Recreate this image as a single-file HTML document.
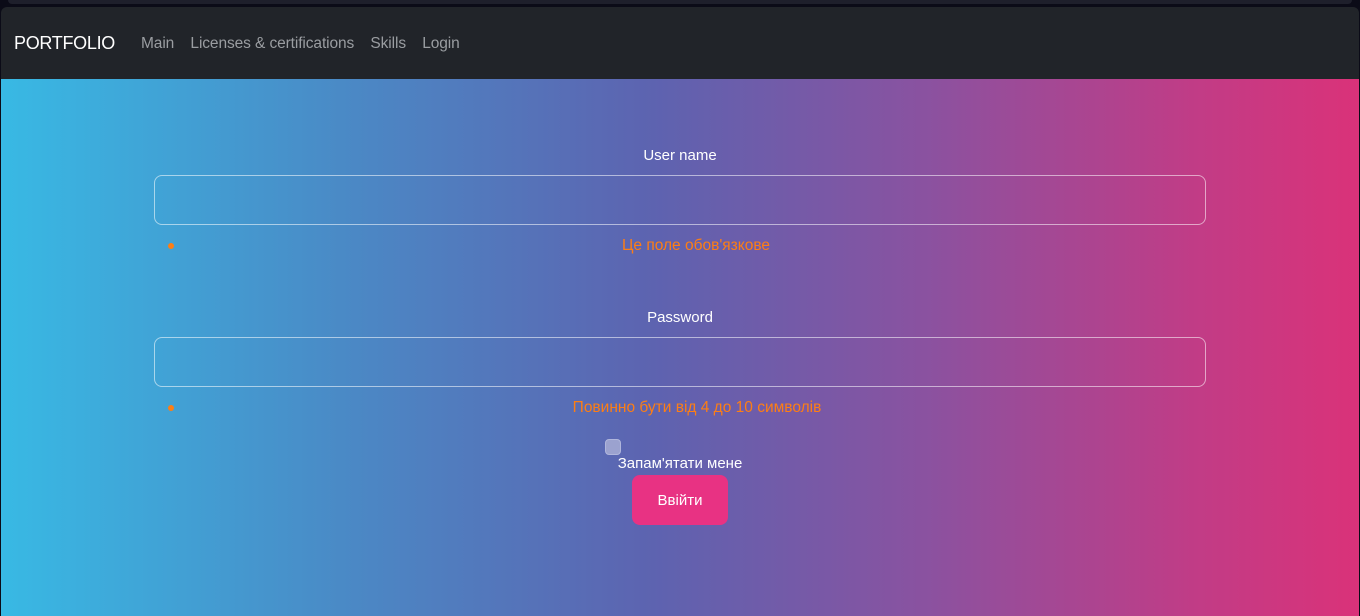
<!DOCTYPE html>
<html><head><meta charset="utf-8"><style>
*{box-sizing:border-box;margin:0;padding:0}
html,body{width:1360px;height:616px;overflow:hidden;background:#0b0b17;font-family:"Segoe UI","Liberation Sans","Noto Sans CJK SC",sans-serif;}
.top{position:absolute;left:8px;top:0;width:1344px;height:4px;background:#1e1f2b;border-radius:0 0 4px 4px}
.nav{position:absolute;left:1px;top:7px;width:1358px;height:80px;background:#212429;border-radius:6px 6px 0 0}
.brand{position:absolute;left:13px;top:26px;font-size:18px;color:#fff;letter-spacing:-0.3px}
.links{position:absolute;left:140px;top:28px;font-size:15.5px;color:#9a9da1;letter-spacing:-0.1px}
.links span{margin-right:12px}
.main{position:absolute;left:1px;top:79px;width:1358px;height:537px;background:linear-gradient(90deg,#38b9e4 0%,#4a8ac6 25%,#5d63b0 48%,#8a52a0 68%,#c13c86 88%,#da3279 100%)}
.lbl{position:absolute;width:100%;text-align:center;color:#fff;font-size:15px}
.inp{position:absolute;left:153px;width:1052px;height:50px;border:1px solid rgba(255,255,255,.55);border-radius:8px}
.err{position:absolute;width:100%;text-align:center;color:#fd7e14;font-size:15.5px}
.dot{position:absolute;left:167px;width:6px;height:6px;border-radius:50%;background:#fd7e14}
.cb{position:absolute;left:604px;top:360px;width:16px;height:16px;border-radius:4px;background:#9ba2cf;border:1px solid #b0b6dc}
.btn{position:absolute;left:631px;top:396px;width:96px;height:50px;background:#e83283;border-radius:8px;color:#fff;font-size:15px;text-align:center;line-height:52px}
</style></head><body>
<div class="top"></div>
<div class="nav"><div class="brand">PORTFOLIO</div><div class="links"><span>Main</span> <span>Licenses &amp; certifications</span> <span>Skills</span> <span>Login</span></div></div>
<div class="main">
<div class="lbl" style="top:68px">User name</div>
<div class="inp" style="top:96px"></div>
<div class="dot" style="top:164px"></div>
<div class="err" style="top:158px;padding-left:32px">Це поле обов'язкове</div>
<div class="lbl" style="top:230px">Password</div>
<div class="inp" style="top:258px"></div>
<div class="dot" style="top:326px"></div>
<div class="err" style="top:320px;padding-left:34px">Повинно бути від 4 до 10 символів</div>
<div class="cb"></div>
<div class="lbl" style="top:376px">Запам'ятати мене</div>
<div class="btn">Ввійти</div>
</div>
</body></html>
